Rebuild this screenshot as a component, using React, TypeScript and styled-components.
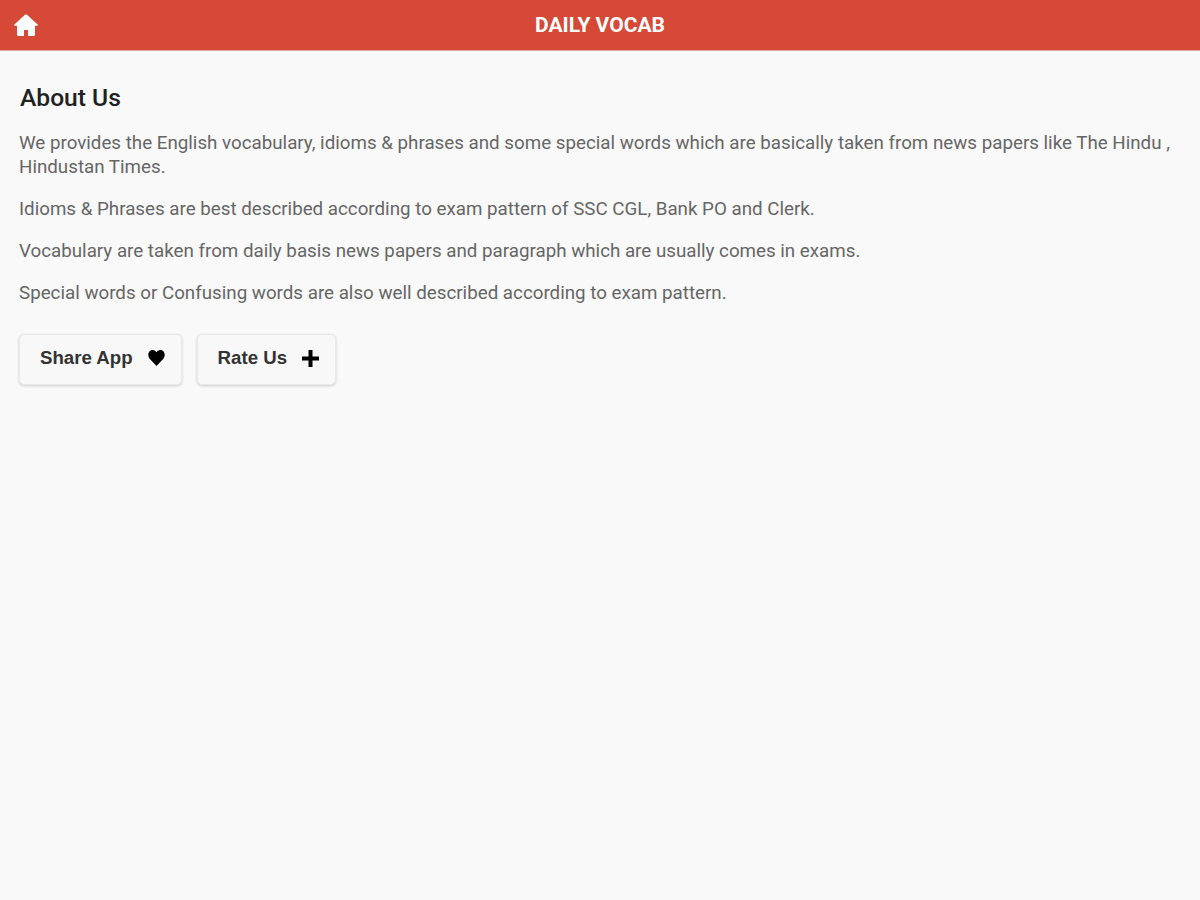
import React from "react";
import styled, { createGlobalStyle } from "styled-components";

const GlobalStyle = createGlobalStyle`
  body { margin: 0; background: #f9f9f9; font-family: Roboto, sans-serif; }
`;
const Page = styled.div`
  min-height: 100vh;
  background: #f9f9f9;
`;
const Header = styled.header`
  display: grid;
  grid-template-columns: 52px 1fr 52px;
  align-items: center;
  height: 50px;
  background: #d64937;
  border-bottom: 1px solid #e3a49b;
  color: #fff;
`;
const HomeLink = styled.a`
  display: flex;
  padding-left: 14px;
`;
const Title = styled.h1`
  margin: 0;
  text-align: center;
  font-size: 21px;
  line-height: 50px;
  font-weight: 700;
`;
const Content = styled.main`
  padding: 31px 19px;
`;
const Heading = styled.h2`
  margin: 0 0 17px 1px;
  font-size: 24.6px;
  line-height: 32px;
  font-weight: 500;
  color: #212121;
`;
const Paragraph = styled.p`
  margin: 0 0 18px;
  font-size: 18.75px;
  line-height: 24px;
  color: #666;
`;
const Actions = styled.div`
  display: flex;
  gap: 15px;
  margin: 29px 0 0;
`;
const ActionButton = styled.button`
  display: flex;
  align-items: center;
  gap: 15px;
  height: 51px;
  padding: 0 16px 3px 20px;
  border: 1px solid #e8e8e8;
  border-radius: 5px;
  background: #f8f8f8;
  box-shadow: 0 1px 3px rgba(0, 0, 0, 0.18);
  font: 700 18.67px "Liberation Sans", Arial, sans-serif;
  color: #333;
`;

export default function App() {
  return (
    <Page>
      <GlobalStyle />
      <Header>
        <HomeLink aria-label="Home">
          <svg width="24" height="22" viewBox="0 0 24 22" fill="#fff">
            <path d="M11 .8 Q12 0 13 .8 L23.600 10.600 Q24.200 11.600 23 11.800 H21 V20.500 Q21 22 19.500 22 H14 V16 H10 V22 H4.500 Q3 22 3 20.500 V11.800 H1 Q-.2 11.600 .4 10.600 Z" />
          </svg>
        </HomeLink>
        <Title>DAILY VOCAB</Title>
      </Header>
      <Content>
        <Heading>About Us</Heading>
        <Paragraph>
          We provides the English vocabulary, idioms &amp; phrases and some special words which are basically taken from news papers like The Hindu , Hindustan Times.
        </Paragraph>
        <Paragraph>
          Idioms &amp; Phrases are best described according to exam pattern of SSC CGL, Bank PO and Clerk.
        </Paragraph>
        <Paragraph>
          Vocabulary are taken from daily basis news papers and paragraph which are usually comes in exams.
        </Paragraph>
        <Paragraph>
          Special words or Confusing words are also well described according to exam pattern.
        </Paragraph>
        <Actions>
          <ActionButton>
            Share App
            <svg width="17" height="16" viewBox="0 0 18 16" preserveAspectRatio="none" fill="#000">
              <path d="M9 16 L1.500 8.500 C-1 5 .5 0 5 0 C7 0 8.300 1 9 2.300 C9.700 1 11 0 13 0 C17.500 0 19 5 16.500 8.500 Z" />
            </svg>
          </ActionButton>
          <ActionButton>
            Rate Us
            <svg width="17" height="17" viewBox="0 0 17 17" fill="#000">
              <path d="M6.500 0 H10.500 V6.500 H17 V10.500 H10.500 V17 H6.500 V10.500 H0 V6.500 H6.500 Z" />
            </svg>
          </ActionButton>
        </Actions>
      </Content>
    </Page>
  );
}
